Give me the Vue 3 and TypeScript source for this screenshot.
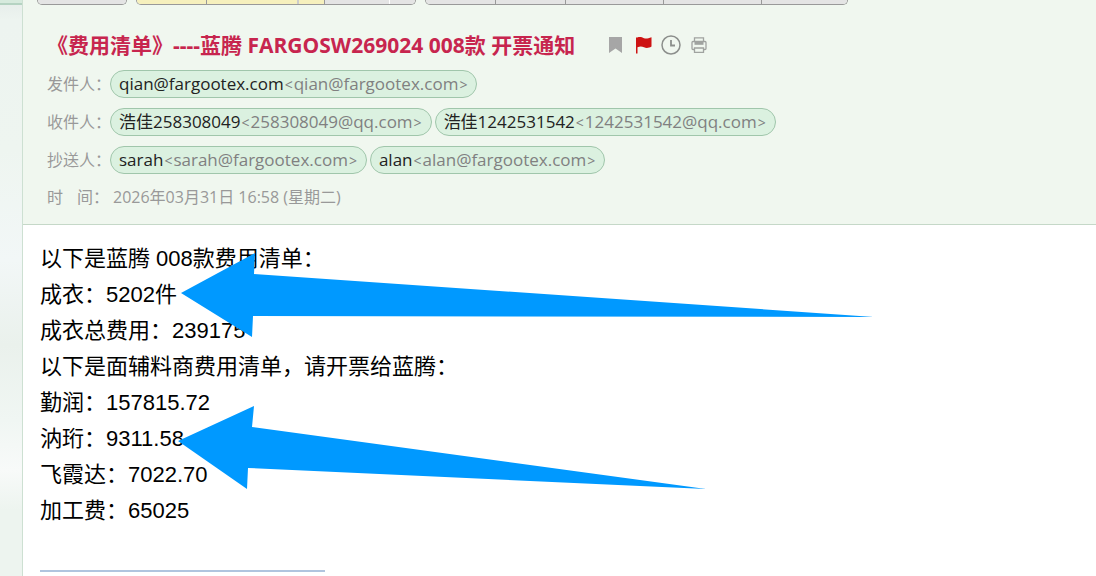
<script setup lang="ts">
interface Contact {
  name: string
  address: string
}

interface ContactRow {
  label: string
  contacts: Contact[]
}

interface ToolButton {
  label: string
  size: string
}

const toolGroups: ToolButton[][] = [
  [{ label: '返回', size: 'w88' }],
  [
    { label: '回复', size: 'w69 reply' },
    { label: '回复全部', size: 'w90 reply soft' },
    { label: '更多回复', size: 'w25 reply' },
    { label: '转发', size: 'w64 pale' },
    { label: '更多转发', size: 'w25' },
  ],
  [
    { label: '删除', size: 'w69' },
    { label: '举报', size: 'w69' },
    { label: '彻底删除', size: 'w97' },
    { label: '标记为', size: 'w97' },
    { label: '移动到', size: 'w85' },
  ],
]

const rows: ContactRow[] = [
  {
    label: '发件人：',
    contacts: [{ name: 'qian@fargootex.com', address: 'qian@fargootex.com' }],
  },
  {
    label: '收件人：',
    contacts: [
      { name: '浩佳258308049', address: '258308049@qq.com' },
      { name: '浩佳1242531542', address: '1242531542@qq.com' },
    ],
  },
  {
    label: '抄送人：',
    contacts: [
      { name: 'sarah', address: 'sarah@fargootex.com' },
      { name: 'alan', address: 'alan@fargootex.com' },
    ],
  },
]

const lines: string[] = [
  '以下是蓝腾 008款费用清单：',
  '成衣：5202件',
  '成衣总费用：239175',
  '以下是面辅料商费用清单，请开票给蓝腾：',
  '勤润：157815.72',
  '汭珩：9311.58',
  '飞霞达：7022.70',
  '加工费：65025',
]
</script>

<template>
  <div class="mail">
    <aside class="side"><div class="side-top"></div></aside>
    <main class="content">
      <header class="head">
        <nav class="toolbar" aria-label="邮件操作">
          <div v-for="(group, g) in toolGroups" :key="g" class="group">
            <button
              v-for="tool in group"
              :key="tool.label"
              type="button"
              :class="tool.size"
              :aria-label="tool.label"
            ></button>
          </div>
        </nav>

        <div class="subject">
          <h1>《费用清单》----蓝腾 FARGOSW269024 008款 开票通知</h1>
          <div class="marks">
            <button type="button" aria-label="书签">
              <svg width="20" height="20" viewBox="0 0 20 20">
                <path d="M4 2H17V18L10.500 13.500L4 18Z" fill="#a6a6a6" />
              </svg>
            </button>
            <button type="button" aria-label="红旗">
              <svg width="20" height="20" viewBox="0 0 20 20">
                <path d="M3 2.500H4.300C7 1.500 9 2.300 11 3.200C13 4 15 3.600 18.500 2.200V11.600C15.500 13.400 13 13.300 11 12.300C9 11.400 7 11.200 4.500 12.300V18.500H3Z" fill="#cd1313" />
              </svg>
            </button>
            <button type="button" aria-label="提醒">
              <svg width="20" height="20" viewBox="0 0 20 20" fill="none" stroke="#8c8f8c">
                <circle cx="10" cy="10" r="9" stroke-width="1.500" />
                <path d="M10 5V10.500H14" stroke-width="1.800" />
              </svg>
            </button>
            <button type="button" aria-label="打印">
              <svg width="20" height="20" viewBox="0 0 20 20" fill="none" stroke="#a0a3a0" stroke-width="1.300">
                <path d="M5.500 7V2.800H14.500V7M5.500 14.500H4Q3 14.500 3 13.500V7.500Q3 6.500 4 6.500H16Q17 6.500 17 7.500V13.500Q17 14.500 16 14.500H14.500" />
                <path d="M5.500 6.500H14.500V9.800H5.500Z" fill="#a0a3a0" stroke="none" />
                <path d="M5.500 13H14.500V17.300H5.500Z" />
              </svg>
            </button>
          </div>
        </div>

        <dl class="meta">
          <div v-for="row in rows" :key="row.label" class="row">
            <dt>{{ row.label }}</dt>
            <dd>
              <span v-for="contact in row.contacts" :key="contact.address" class="chip"
                >{{ contact.name }}<span class="address"><i>&lt;</i>{{ contact.address }}<i>&gt;</i></span></span
              >
            </dd>
          </div>
          <div class="row">
            <dt class="time"><span>时</span><span>间：</span></dt>
            <dd class="date">2026年03月31日 16:58 (星期二)</dd>
          </div>
        </dl>
      </header>

      <article class="body">
        <p v-for="line in lines" :key="line">{{ line }}</p>
        <hr />
        <svg class="arrows" width="700" height="240" viewBox="178 251 700 240" fill="#0099ff" aria-hidden="true">
          <polygon points="181,293 255,253 254,274 874,317 253,316 252,337" />
          <polygon points="178,441 254,406 252,427 706,489 248,468 247,489" />
        </svg>
      </article>
    </main>
  </div>
</template>

<style>
body {
  margin: 0;
  overflow: hidden;
}
</style>

<style scoped>
.mail {
  display: flex;
  min-height: 100vh;
  font-family: "Open Sans", "Noto Sans CJK SC", sans-serif;
  font-size: 16px;
  background: #fff;
}

.side {
  flex: none;
  width: 22px;
  border-right: 1px solid #cde0d2;
  background: linear-gradient(#e6edea 0, #edf4f0 20px, #eef5f0 150px, #f2f7f7 260px, #eaf1ec 345px, #f0f6f3 420px, #f8faf9 470px, #edf4ef 510px, #edf4ef 576px);
}

.side-top {
  height: 3px;
  background: #d6eadd;
  border-bottom: 2px solid #b5d3c2;
}

.content {
  flex: 1;
  min-width: 0;
}

.head {
  background: #f0f7ef;
  border-bottom: 1px solid #c5d8c8;
  padding: 0 14px 14px;
}

.toolbar {
  display: flex;
  gap: 9px;
}

.group {
  display: flex;
  box-sizing: border-box;
  height: 5px;
  overflow: hidden;
  border: 1px solid #999;
  border-top: 0;
  border-radius: 0 0 5px 5px;
}

.group button {
  box-sizing: content-box;
  height: 4px;
  padding: 0;
  border: 0;
  border-right: 1px solid #999;
  background: #e4e4e4;
}

.group button:last-child {
  border-right: 0;
}

.group .reply {
  background: #f6f0bd;
}

.group .soft {
  border-right: 2px solid #ccc;
}

.group .pale {
  border-right-color: #fff;
}

.w25 { width: 25px; }
.w64 { width: 64px; }
.w69 { width: 69px; }
.w85 { width: 85px; }
.w88 { width: 88px; }
.w90 { width: 90px; }
.w97 { width: 97px; }

.subject {
  display: flex;
  align-items: center;
  gap: 30px;
  padding: 25px 0 10px 10px;
}

h1 {
  margin: 0;
  color: #c7254e;
  font-size: 21px;
  line-height: 30px;
  font-weight: 700;
  white-space: nowrap;
}

.marks {
  display: flex;
  gap: 8px;
}

.marks button {
  display: block;
  width: 20px;
  height: 20px;
  padding: 0;
  border: 0;
  background: none;
}

.marks svg {
  display: block;
}

.meta {
  display: flex;
  flex-direction: column;
  gap: 10px;
  margin: 0 0 0 10px;
}

.row {
  display: flex;
  align-items: center;
  line-height: 26px;
  white-space: nowrap;
}

dt {
  flex: none;
  width: 63px;
  color: #999;
}

.time {
  display: flex;
  gap: 14px;
}

dd {
  display: flex;
  gap: 3px;
  margin: 0;
}

.date {
  padding-left: 3px;
  color: #999;
}

.chip {
  padding: 0 8px;
  border: 1px solid #a0c6ab;
  border-radius: 14px;
  background: #dbf1e0;
  color: #222;
  font-size: 17px;
}

.address {
  color: #808080;
}

.address i {
  margin: 0 1px;
  font-size: 14px;
  font-style: normal;
  line-height: 1;
}

.body {
  position: relative;
  padding: 16px 17px;
  color: #000;
  font-family: "Liberation Sans", "Noto Sans CJK SC", sans-serif;
  font-size: 22px;
  line-height: 36px;
}

.body p {
  margin: 0;
}

hr {
  width: 285px;
  height: 2px;
  margin: 41px 0 0;
  border: 0;
  background: #b0c4de;
}

.arrows {
  position: absolute;
  left: 155px;
  top: 26px;
}
</style>
